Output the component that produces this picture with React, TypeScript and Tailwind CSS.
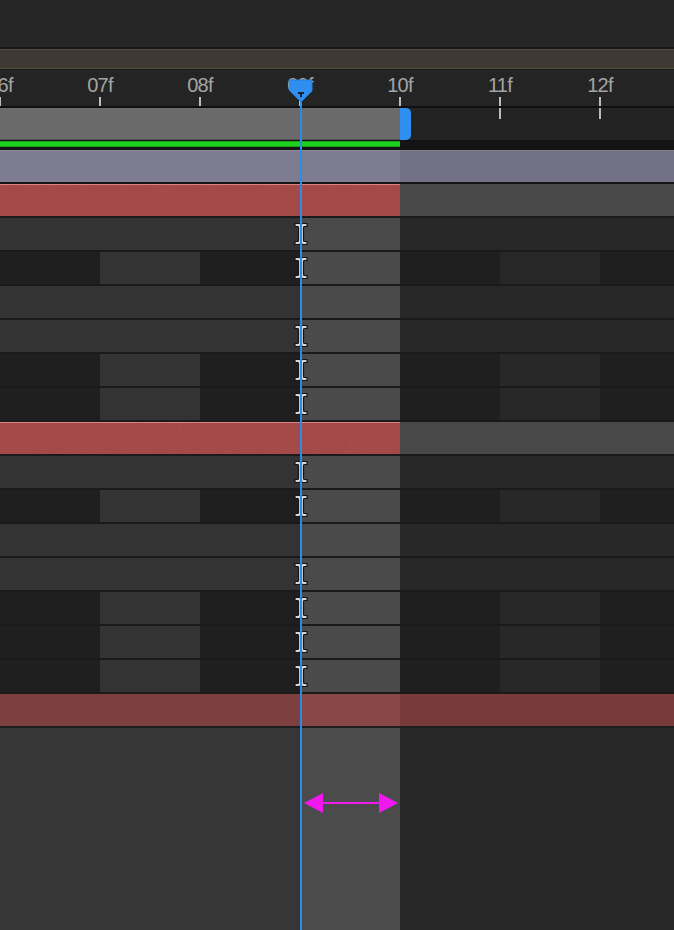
const labels = ["06f", "07f", "08f", "09f", "10f", "11f", "12f"];

type RowKind = "U" | "A" | "R";

const widths = ["w-[100px]", "w-[100px]", "w-[100px]", "w-[100px]", "w-[100px]", "w-[100px]", "flex-1"];

const palette: Record<RowKind, string[]> = {
  U: ["bg-[#333333]", "bg-[#333333]", "bg-[#333333]", "bg-[#4a4a4a]", "bg-[#282828]", "bg-[#282828]", "bg-[#282828]"],
  A: ["bg-[#1f1f1f]", "bg-[#333333]", "bg-[#1f1f1f]", "bg-[#4a4a4a]", "bg-[#1f1f1f]", "bg-[#272727]", "bg-[#1f1f1f]"],
  R: [],
};

const rows: { kind: RowKind; ibeam: boolean }[] = [
  { kind: "U", ibeam: true },
  { kind: "A", ibeam: true },
  { kind: "U", ibeam: false },
  { kind: "U", ibeam: true },
  { kind: "A", ibeam: true },
  { kind: "A", ibeam: true },
  { kind: "R", ibeam: false },
  { kind: "U", ibeam: true },
  { kind: "A", ibeam: true },
  { kind: "U", ibeam: false },
  { kind: "U", ibeam: true },
  { kind: "A", ibeam: true },
  { kind: "A", ibeam: true },
  { kind: "A", ibeam: true },
];

// keyframe "I" marker sitting on the playhead
const IBeam = () => (
  <svg className="absolute left-[294px] top-[4px]" width="14" height="24" viewBox="0 0 14 24">
    <path
      d="M1 1.5 H5 Q7 1.5 7 3.5 Q7 1.5 9 1.5 H13 V4.5 H10 Q9.5 4.5 9.5 6 V18 Q9.5 19.5 10 19.5 H13 V22.5 H9 Q7 22.5 7 20.5 Q7 22.5 5 22.5 H1 V19.5 H4 Q4.5 19.5 4.5 18 V6 Q4.5 4.5 4 4.5 H1 Z"
      fill="#d6d6d6"
      stroke="#151515"
      strokeWidth="1.2"
      strokeLinejoin="round"
    />
  </svg>
);

const Grain = () => (
  <svg className="absolute inset-0 h-full w-full" preserveAspectRatio="none">
    <filter id="grain">
      <feTurbulence type="fractalNoise" baseFrequency="0.9" numOctaves="2" seed="3" />
      <feColorMatrix values="0 0 0 0 0  0 0 0 0 0  0 0 0 0 0  0 0 0 0.35 0" />
    </filter>
    <rect width="100%" height="100%" filter="url(#grain)" opacity="0.35" />
  </svg>
);

const RedBar = () => (
  <div className="flex h-[34px] shrink-0 border-b-2 border-[#1b1b1b]">
    <div className="relative w-[400px] border-t border-[#d88482] bg-[#af4f4e]">
      <Grain />
    </div>
    <div className="flex-1 bg-[#484848]" />
  </div>
);

const TrackRow = ({ kind, ibeam }: { kind: RowKind; ibeam: boolean }) => {
  if (kind === "R") return <RedBar />;
  return (
    <div className="relative flex h-[34px] shrink-0 border-b-2 border-[#1a1a1a]">
      {widths.map((w, i) => (
        <div key={i} className={`${w} ${palette[kind][i]}`} />
      ))}
      {ibeam && <IBeam />}
    </div>
  );
};

export default function App() {
  return (
    <div
      className="relative flex h-[930px] w-[674px] flex-col overflow-hidden bg-[#262626]"
      style={{ fontFamily: '"Liberation Sans", Arial, sans-serif' }}
    >
      {/* panel top */}
      <div className="h-[47px] shrink-0 bg-[#262626]" />
      <div className="h-[2px] shrink-0 bg-[#171717]" />
      <div className="h-[20px] shrink-0 border-y border-[#554c3f] bg-[#3e3932]" />
      <div className="h-[1px] shrink-0 bg-[#1a1a1a]" />

      {/* time ruler */}
      <div className="h-[38px] shrink-0 overflow-hidden border-b-2 border-[#101010] bg-[#242424]">
        <div className="-ml-[50px] flex">
          {labels.map((l, i) => (
            <div key={l} className="flex w-[100px] shrink-0 flex-col items-center pt-[5px]">
              <div className="h-[20px] text-[20px] leading-[20px] tracking-[-0.8px] text-[#a4a4a4]">{l}</div>
              <div className={`mt-[2px] w-[2px] bg-[#bdbdbd] ${i >= 5 ? "h-[10px]" : "h-[9px]"}`} />
            </div>
          ))}
        </div>
      </div>

      {/* work area */}
      <div className="flex h-[32px] shrink-0">
        <div className="w-[400px] border-b border-[#555] bg-[#6a6a6a]" />
        <div className="w-[11px] rounded-r-[5px] bg-[#2f8ff0]" />
        <div className="flex flex-1 items-start bg-[#232323]">
          <div className="ml-[88px] h-[11px] w-[2px] bg-[#bdbdbd]" />
          <div className="ml-[98px] h-[11px] w-[2px] bg-[#bdbdbd]" />
        </div>
      </div>
      <div className="flex h-[10px] shrink-0 bg-[#141414]">
        <div className="mt-[1px] h-[6px] w-[400px] border-y border-[#18a018] bg-[#20d020]" />
      </div>

      {/* comp bar */}
      <div className="flex h-[34px] shrink-0 border-b-2 border-[#141414]">
        <div className="w-[400px] border-t border-[#8e8c9e] bg-[#7e7c90]" />
        <div className="flex-1 border-t border-[#84828f] bg-[#737186]" />
      </div>

      <RedBar />

      {rows.map((r, i) => (
        <TrackRow key={i} kind={r.kind} ibeam={r.ibeam} />
      ))}

      {/* selected layer bar */}
      <div className="flex h-[34px] shrink-0 border-b-2 border-[#1e1e1e]">
        <div className="w-[300px] bg-[#7d3f3f]" />
        <div className="w-[100px] bg-[#884747]" />
        <div className="flex-1 bg-[#783a3a]" />
      </div>

      {/* empty area */}
      <div className="flex flex-1">
        <div className="w-[300px] bg-[#363636]" />
        <div className="w-[100px] bg-[#4b4b4b]" />
        <div className="flex-1 bg-[#282828]" />
      </div>

      {/* playhead */}
      <div className="absolute bottom-0 left-[300px] top-[98px] w-[2px] bg-[#2b8be8]" />
      <svg className="absolute left-[289px] top-[79px]" width="24" height="24" viewBox="0 0 24 24">
        <path d="M1 1 H23 V12 L12 23 L1 12 Z" fill="#2e8ff0" stroke="#2a7fd6" strokeWidth="1" />
        <path d="M9 13 H15 V15 H13 V18 H11 V15 H9 Z" fill="#1a2430" />
      </svg>

      {/* duration arrow */}
      <svg className="absolute left-[303px] top-[792px]" width="96" height="22" viewBox="0 0 96 22">
        <path d="M18 10 H78 V12 H18 Z" fill="#f019f0" />
        <path d="M1 11 L20 1 V21 Z" fill="#f019f0" />
        <path d="M95 11 L76 1 V21 Z" fill="#f019f0" />
      </svg>
    </div>
  );
}
